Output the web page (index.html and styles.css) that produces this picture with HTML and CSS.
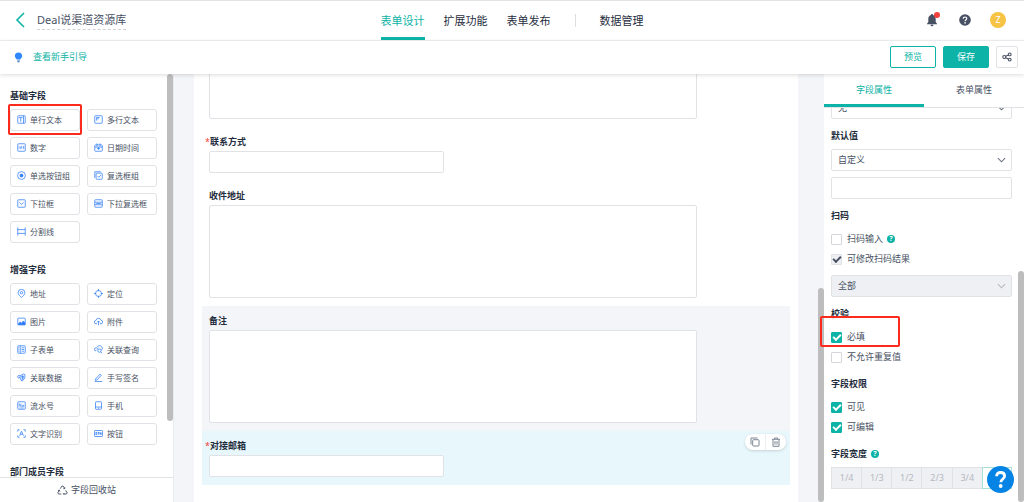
FILE: index.html
```html
<!DOCTYPE html>
<html lang="zh-CN">
<head>
<meta charset="utf-8">
<meta name="viewport" content="width=device-width, initial-scale=1">
<title>Deal说渠道资源库</title>
<link rel="stylesheet" href="styles.css">
</head>
<body>
<div class="app">
  <header class="topbar">
    <div class="topbar-left">
      <button class="icon-btn" aria-label="返回"><svg width="10" height="16" viewBox="0 0 10 16" fill="none" stroke="#0db3a6" stroke-width="1.6"><path d="M9 1 2 8l7 7"/></svg></button>
      <h1 class="form-title">Deal说渠道资源库</h1>
    </div>
    <nav class="main-nav">
      <a class="nav-link active" href="#design">表单设计</a>
      <a class="nav-link" href="#extend">扩展功能</a>
      <a class="nav-link" href="#publish">表单发布</a>
      <span class="nav-divider"></span>
      <a class="nav-link" href="#data">数据管理</a>
    </nav>
    <div class="topbar-right">
      <button class="icon-btn bell" aria-label="通知"><svg width="12" height="14" viewBox="0 0 12 14" fill="#485163"><path d="M6 1c.7 0 1 .4 1 1 1.800.5 2.700 2 2.700 4v3l1.300 1.700v.5H1v-.5L2.300 9V6c0-2 .9-3.500 2.700-4 0-.6.3-1 1-1zM4.500 11.700h3c0 .9-.6 1.500-1.500 1.500s-1.500-.6-1.500-1.500z"/></svg><span class="bell-dot"></span></button>
      <button class="icon-btn" aria-label="帮助"><svg width="12" height="12" viewBox="0 0 12 12"><circle cx="6" cy="6" r="5.800" fill="#485163"/><path d="M4.200 4.700c0-1.100.8-1.700 1.800-1.700s1.800.6 1.800 1.600c0 1.200-1.700 1.300-1.700 2.600" fill="none" stroke="#fff" stroke-width="1.200"/><circle cx="6.100" cy="8.900" r=".8" fill="#fff"/></svg></button>
      <span class="avatar">Z</span>
    </div>
  </header>

  <div class="subbar">
    <a class="guide" href="#guide"><svg width="9" height="11" viewBox="0 0 9 11"><path d="M4.500.5a3.600 3.600 0 0 1 3.600 3.600c0 1.500-1 2.300-1.800 3.400H2.700C1.900 6.400.9 5.600.9 4.100A3.600 3.600 0 0 1 4.500.5z" fill="#2f88ff"/><path d="M3.200 8.200h2.600v1L5 10.400H4l-.8-1.200z" fill="#6d93c9"/></svg>查看新手引导</a>
    <div class="actions">
      <button class="btn btn-outline">预览</button>
      <button class="btn btn-primary">保存</button>
      <button class="btn btn-share" aria-label="分享"><svg width="10" height="10" viewBox="0 0 10 10" fill="none" stroke="#485163" stroke-width="1.100"><circle cx="2.300" cy="5" r="1.500"/><circle cx="7.700" cy="2.400" r="1.400"/><circle cx="7.700" cy="7.600" r="1.400"/><path d="m3.700 4.300 2.700-1.300M3.700 5.700l2.700 1.300"/></svg></button>
    </div>
  </div>

  <div class="workspace">
    <aside class="sidebar">
      <div class="palette">
        <section class="group">
          <h2 class="heading">基础字段</h2>
          <div class="field-grid">
            <button class="field marked"><svg class="fi" viewBox="0 0 12 12"><rect x="1" y="1" width="10" height="10" rx="1"/><path d="M2.500 3.500h5M5 3.500V9M8.700 1v10"/></svg>单行文本</button>
            <button class="field"><svg class="fi" viewBox="0 0 12 12"><rect x="1" y="1" width="10" height="10" rx="1"/><path d="M3 3.500h4.500M3.500 3.500V7.500M5.300 3.500V6"/></svg>多行文本</button>
            <button class="field"><svg class="fi" viewBox="0 0 12 12"><rect x="1" y="1" width="10" height="10" rx="1"/><path d="M3 4.500v3M4.700 4.500h1.500V6H4.700v1.500h1.500M7.700 4.500H9v3H7.700M7.700 6H9" stroke-width=".8"/></svg>数字</button>
            <button class="field"><svg class="fi" viewBox="0 0 12 12"><rect x="1" y="2.500" width="10" height="8.500" rx="1"/><path d="M4 .5V5M8 .5V5M1 5.500h10M6 5.500V9M4 7.500h4"/></svg>日期时间</button>
            <button class="field"><svg class="fi" viewBox="0 0 12 12"><circle cx="6" cy="6" r="5.200"/><circle cx="6" cy="6" r="2" fill="#2f7cf6"/></svg>单选按钮组</button>
            <button class="field"><svg class="fi" viewBox="0 0 12 12"><path d="M9 1H1v8"/><rect x="2.800" y="2.800" width="8.200" height="8.200" rx="1"/><path d="m4.800 6.700 1.700 1.700L9.300 5.300"/></svg>复选框组</button>
            <button class="field"><svg class="fi" viewBox="0 0 12 12"><rect x="1" y="1" width="10" height="10" rx="1"/><path d="M3.200 4.500 6 7.300l2.800-2.800"/></svg>下拉框</button>
            <button class="field"><svg class="fi" viewBox="0 0 12 12"><rect x="1" y="1" width="10" height="10" rx="1"/><path d="M1 4.300h10M1 7.700h10M3 6h6"/></svg>下拉复选框</button>
            <button class="field"><svg class="fi" viewBox="0 0 12 12"><path d="M1 .5v11M11 .5v11M1 3.500h10M1 8.500h10"/></svg>分割线</button>
          </div>
        </section>
        <section class="group">
          <h2 class="heading">增强字段</h2>
          <div class="field-grid">
            <button class="field"><svg class="fi" viewBox="0 0 12 12"><path d="M6 11.300C3.500 9 1.500 7.300 1.500 4.900a4.500 4.500 0 0 1 9 0c0 2.400-2 4.100-4.500 6.400z"/><circle cx="6" cy="5" r="1.600"/></svg>地址</button>
            <button class="field"><svg class="fi" viewBox="0 0 12 12"><circle cx="6" cy="6" r="4"/><path d="M6 0v3M6 9v3M0 6h3M9 6h3"/></svg>定位</button>
            <button class="field"><svg class="fi" viewBox="0 0 12 12"><rect x="1" y="1.500" width="10" height="9" rx="1"/><path d="m1.500 10 2.500-3.500L6 8.300l2.500-3L10.700 8v2.200z" fill="#2f7cf6"/></svg>图片</button>
            <button class="field"><svg class="fi" viewBox="0 0 12 12"><path d="M4 9H2.800a2.200 2.200 0 0 1-.3-4.400 3.600 3.600 0 0 1 7-.1A2.200 2.200 0 0 1 9.300 9H8M6 11V5.500M4 7.300l2-2 2 2"/></svg>附件</button>
            <button class="field"><svg class="fi" viewBox="0 0 12 12"><rect x="1" y="1" width="10" height="10" rx="1"/><path d="M4.300 1v10M6 3.700h3.500M6 6h3.500M6 8.300h3.500M2 3.700h1M2 6h1M2 8.300h1"/></svg>子表单</button>
            <button class="field"><svg class="fi" viewBox="0 0 12 12"><path d="M3 7.800a2 2 0 1 1 0-3.900L6 1.200a3.500 3.500 0 0 1 4 5.600M3.500 6l2.500-2"/><circle cx="7.300" cy="7.500" r="2.200"/><path d="m8.900 9.100 2 2"/></svg>关联查询</button>
            <button class="field"><svg class="fi" viewBox="0 0 12 12"><circle cx="2.600" cy="5" r="1.700"/><path d="M4 4 8.500 1.200l2 1V6.500L7 10.800 5.200 9.500M4 6l2 4.500M5.500 4.500h4M5.500 6.500h4M7.500 3v6"/></svg>关联数据</button>
            <button class="field"><svg class="fi" viewBox="0 0 12 12"><path d="m2 8 6-6.500 1.700 1.600L4 9.300l-2.300.5zM1 11.300h10"/></svg>手写签名</button>
            <button class="field"><svg class="fi" viewBox="0 0 12 12"><rect x="1" y="1" width="10" height="10" rx="1"/><path d="M3 7.500v-4l2.300 4v-4M7 5.500h2V7.500H7zM3 9.300h6" stroke-width=".8"/></svg>流水号</button>
            <button class="field"><svg class="fi" viewBox="0 0 12 12"><rect x="2" y="1" width="8" height="10" rx="1"/><path d="M2 8h8M5.300 9.500h1.400"/></svg>手机</button>
            <button class="field"><svg class="fi" viewBox="0 0 12 12"><path d="M1 3.500V1h2.500M8.500 1H11v2.500M11 8.500V11H8.500M3.500 11H1V8.500M3.500 9 6 3l2.500 6M4.500 7h3"/></svg>文字识别</button>
            <button class="field"><svg class="fi" viewBox="0 0 12 12"><rect x=".6" y="2" width="10.800" height="8" rx="1"/><path d="M2.500 4.500h1.300v3H2.500zM5 4.500h2M6 4.500v3M8 7.500v-3l1.500 3v-3"/></svg>按钮</button>
          </div>
        </section>
        <section class="group">
          <h2 class="heading">部门成员字段</h2>
        </section>
      </div>
      <button class="recycle"><svg width="11" height="10" viewBox="0 0 11 10" fill="none" stroke="#485163" stroke-width=".9"><path d="M3.300 3.700 4.800 1.100h1.400l1.400 2.400M8.700 5.300l1.500 2.600-.7 1.100H6.500M4.300 9H1.500L.8 7.900l1.500-2.700M7.800 2.200v1.500H6.300M7.500 7.900 6.400 9l1.100.9M1 5.600l1.400-.5.500 1.400"/></svg>字段回收站</button>
      <span class="scroll-thumb thumb-left"></span>
    </aside>

    <main class="canvas">
      <form class="paper">
        <div class="form-item">
          <textarea class="area" aria-label="多行文本"></textarea>
        </div>
        <div class="form-item">
          <label class="heading required" for="f1">联系方式</label>
          <input class="line" id="f1" type="text">
        </div>
        <div class="form-item">
          <label class="heading" for="f2">收件地址</label>
          <textarea class="area" id="f2"></textarea>
        </div>
        <div class="form-item hovered">
          <label class="heading" for="f3">备注</label>
          <textarea class="area" id="f3"></textarea>
        </div>
        <div class="form-item selected">
          <label class="heading required" for="f4">对接邮箱</label>
          <input class="line" id="f4" type="text">
          <div class="item-tools">
            <button type="button" aria-label="复制"><svg width="10" height="10" viewBox="0 0 10 10" fill="none" stroke="#7d8593"><path d="M1 7.500V1h6.500"/><rect x="2.700" y="2.700" width="6.300" height="6.300" rx=".8"/></svg></button>
            <button type="button" aria-label="删除"><svg width="10" height="10" viewBox="0 0 10 10" fill="none" stroke="#7d8593"><path d="M1 2.300h8M3.500 2V1h3v1M2 2.500V9.300h6V2.500M4 4v3.700M6 4v3.700"/></svg></button>
          </div>
        </div>
      </form>
      <span class="scroll-thumb thumb-middle"></span>
    </main>

    <aside class="props">
      <div class="tabs" role="tablist">
        <button class="tab active" role="tab" aria-selected="true">字段属性</button>
        <button class="tab" role="tab" aria-selected="false">表单属性</button>
      </div>
      <div class="props-body">
        <div class="select-box first"><select aria-label="格式"><option>无</option></select><svg class="caret" viewBox="0 0 10 6"><path d="m1 1 4 4 4-4"/></svg></div>

        <section class="prop">
          <label class="heading" for="def">默认值</label>
          <div class="select-box"><select id="def"><option>自定义</option></select><svg class="caret" viewBox="0 0 10 6"><path d="m1 1 4 4 4-4"/></svg></div>
          <input class="line full" type="text" aria-label="默认值内容">
        </section>

        <section class="prop">
          <h2 class="heading">扫码</h2>
          <div class="checks">
            <label class="check"><input type="checkbox">扫码输入<span class="hint">?</span></label>
            <label class="check"><input type="checkbox" checked disabled>可修改扫码结果</label>
          </div>
          <div class="select-box off"><select aria-label="扫码类型" disabled><option>全部</option></select><svg class="caret" viewBox="0 0 10 6"><path d="m1 1 4 4 4-4"/></svg></div>
        </section>

        <section class="prop">
          <h2 class="heading">校验</h2>
          <div class="checks">
            <label class="check marked"><input type="checkbox" checked>必填</label>
            <label class="check"><input type="checkbox">不允许重复值</label>
          </div>
        </section>

        <section class="prop">
          <h2 class="heading">字段权限</h2>
          <div class="checks">
            <label class="check"><input type="checkbox" checked>可见</label>
            <label class="check"><input type="checkbox" checked>可编辑</label>
          </div>
        </section>

        <section class="prop">
          <h2 class="heading">字段宽度<span class="hint">?</span></h2>
          <div class="segments">
            <button disabled>1/4</button><button disabled>1/3</button><button disabled>1/2</button><button disabled>2/3</button><button disabled>3/4</button><button class="on" aria-label="整行"></button>
          </div>
        </section>
      </div>
      <span class="scroll-thumb thumb-right"></span>
      <button class="help-float" aria-label="在线帮助"><svg width="27" height="27" viewBox="0 0 27 27"><circle cx="13.500" cy="13.500" r="13.500" fill="#0684e6"/><path d="M9.600 10.200c0-2.500 1.700-3.700 4-3.700s4 1.300 4 3.500c0 3-3.800 3-3.800 6.300" fill="none" stroke="#fff" stroke-width="2.800"/><circle cx="13.700" cy="20" r="1.900" fill="#fff"/></svg></button>
    </aside>
  </div>
</div>
</body>
</html>
```

FILE: styles.css
```css
*,
*::before,
*::after {
  box-sizing: border-box;
}

:root {
  --teal: #0db3a6;
  --ink: #1f2d3d;
  --text: #485163;
  --line: #e0e2e6;
  --mark: #fb2a1c;
}

body {
  margin: 0;
  background: #fff;
  color: var(--text);
  font: 9px/14px "Noto Sans", "Noto Sans CJK SC", sans-serif;
}

button,
input,
select,
textarea {
  margin: 0;
  padding: 0;
  border: 0;
  color: inherit;
  font: inherit;
}

button {
  background: none;
}

svg {
  display: block;
  flex: none;
}

a {
  color: inherit;
  text-decoration: none;
}

.app {
  display: flex;
  flex-direction: column;
  height: 100vh;
  overflow: hidden;
}

/* Top bar */
.topbar {
  display: grid;
  grid-template-columns: 1fr auto 1fr;
  flex: none;
  height: 41px;
  border-top: 1px solid #e3e3e3;
  border-bottom: 1px solid #f1f2f4;
}

.topbar-left,
.topbar-right,
.main-nav,
.subbar,
.guide,
.actions {
  display: flex;
  align-items: center;
}

.topbar-left {
  gap: 12px;
  padding: 0 0 2px 15px;
}

.form-title {
  margin: 0;
  border-bottom: 1px dashed #cfd2d6;
  font-size: 11px;
  font-weight: 400;
  line-height: 19px;
}

.main-nav {
  gap: 19px;
  color: var(--ink);
  font-size: 11px;
}

.nav-link {
  padding-top: 3px;
  border-bottom: 3px solid transparent;
  line-height: 32px;
}

.nav-link.active {
  border-color: var(--teal);
  color: var(--teal);
}

.nav-divider {
  width: 1px;
  height: 13px;
  margin: 0 5px;
  background: #dcdee2;
}

.topbar-right {
  justify-content: flex-end;
  gap: 19px;
  padding: 0 18px 1px 0;
}

.bell {
  position: relative;
  margin-right: 2px;
}

.bell-dot {
  position: absolute;
  top: -1px;
  right: -2px;
  width: 6px;
  height: 6px;
  border-radius: 50%;
  background: #f5413d;
}

.avatar {
  width: 16px;
  height: 16px;
  border-radius: 50%;
  background: #f7c344;
  color: #fff;
  line-height: 16px;
  text-align: center;
}

/* Action bar */
.subbar {
  position: relative;
  z-index: 1;
  flex: none;
  justify-content: space-between;
  height: 33px;
  padding: 0 6px 1px 14px;
  background: #fff;
  box-shadow: 0 1px 4px rgba(0, 0, 0, 0.15);
}

.guide {
  gap: 10px;
  color: var(--teal);
}

.actions {
  gap: 7px;
}

.btn {
  width: 46px;
  height: 22px;
  border: 1px solid var(--teal);
  border-radius: 2px;
}

.btn-outline {
  color: var(--teal);
}

.btn-primary {
  background: var(--teal);
  color: #fff;
}

.btn-share {
  display: grid;
  place-items: center;
  width: 22px;
  border-color: var(--line);
}

/* Columns */
.workspace {
  display: flex;
  flex: 1;
  min-height: 0;
}

.heading {
  display: flex;
  align-items: center;
  margin: 0;
  color: var(--ink);
  font-size: 9px;
  font-weight: 700;
  line-height: 14px;
}

.scroll-thumb {
  position: absolute;
  right: 0;
  width: 6px;
  border-radius: 3px;
  background: #bdbdbd;
}

.thumb-left {
  top: 0;
  height: 81%;
}

.thumb-middle {
  top: 50%;
  bottom: 0;
}

.thumb-right {
  top: 46%;
  bottom: 0;
}

/* Field palette */
.sidebar {
  position: relative;
  display: flex;
  flex: none;
  flex-direction: column;
  width: 174px;
  border-right: 1px solid #e9ebee;
}

.palette {
  display: flex;
  flex: 1;
  flex-direction: column;
  gap: 20px;
  min-height: 0;
  padding: 15px 16px 0 10px;
  overflow: hidden;
}

.field-grid {
  display: grid;
  grid-template-columns: 1fr 1fr;
  gap: 6px 7px;
  margin-top: 6px;
}

.field {
  display: flex;
  align-items: center;
  gap: 4px;
  height: 22px;
  padding: 0 0 1px 6px;
  border: 1px solid var(--line);
  border-radius: 3px;
  font-size: 8px;
  white-space: nowrap;
}

.fi {
  width: 9px;
  height: 9px;
  fill: none;
  stroke: #2f7cf6;
  stroke-width: 1;
}

.marked {
  position: relative;
}

.marked::before {
  position: absolute;
  border: 2px solid var(--mark);
  border-radius: 2px;
  content: "";
}

.field.marked::before {
  inset: -6px -3px -5px;
}

.recycle {
  display: flex;
  flex: none;
  align-items: center;
  justify-content: center;
  gap: 3px;
  height: 25px;
  border-top: 1px solid var(--line);
}

/* Form canvas */
.canvas {
  position: relative;
  flex: 1;
  min-width: 0;
  padding: 0 26px 0 20px;
  overflow: hidden;
  background: #f4f5f8;
}

.paper {
  min-height: 100%;
  margin-top: -58px;
  padding: 0 8px 100px;
  background: #fff;
}

.form-item {
  position: relative;
  padding: 8px 7px;
}

.hovered {
  background: #f4f5f8;
}

.selected {
  background: #e8f7fb;
}

.required::before {
  margin-left: -4px;
  color: #f5413d;
  content: "*";
  font-weight: 400;
}

.area,
.line {
  display: block;
  margin-top: 2px;
  border: 1px solid var(--line);
  border-radius: 2px;
  background: #fff;
}

.area {
  width: 85%;
  height: 93px;
  resize: none;
}

.line {
  width: 41%;
  height: 22px;
  padding: 0 5px;
}

.item-tools {
  position: absolute;
  top: 3px;
  right: 4px;
  display: flex;
  border-radius: 8px;
  background: #fff;
  box-shadow: 0 1px 3px rgba(0, 0, 0, 0.15);
}

.item-tools button {
  padding: 3px 5px;
}

.item-tools button + button {
  border-left: 1px solid #eceef1;
}

/* Properties */
.props {
  position: relative;
  display: flex;
  flex: none;
  flex-direction: column;
  width: 200px;
}

.tabs {
  display: grid;
  flex: none;
  grid-template-columns: 1fr 1fr;
  height: 34px;
  border-bottom: 1px solid var(--line);
}

.tab {
  padding-top: 2px;
  border-bottom: 3px solid transparent;
}

.tab.active {
  border-color: var(--teal);
  color: var(--teal);
}

.props-body {
  display: flex;
  flex: 1;
  flex-direction: column;
  gap: 10px;
  min-height: 0;
  margin-left: -5px;
  padding: 0 12px;
  overflow: hidden;
}

.prop {
  display: flex;
  flex-direction: column;
  gap: 6px;
}

.select-box {
  position: relative;
  flex: none;
}

.select-box.first {
  margin-top: -11px;
}

.select-box select {
  display: block;
  width: 100%;
  height: 22px;
  padding: 0 6px;
  border: 1px solid var(--line);
  border-radius: 2px;
  appearance: none;
  background: #fff;
}

.select-box.off select {
  background: #eff0f4;
  opacity: 1;
}

.caret {
  position: absolute;
  top: 8px;
  right: 6px;
  width: 9px;
  height: 6px;
  fill: none;
  stroke: #6b7280;
  stroke-width: 1.2;
}

.off .caret {
  stroke: #b4b8c0;
}

.line.full {
  width: 100%;
  margin: 0;
}

.check {
  display: flex;
  align-items: center;
  height: 20px;
}

.check input {
  display: grid;
  place-items: center;
  width: 11px;
  height: 11px;
  margin-right: 5px;
  border: 1px solid #d3d6db;
  border-radius: 1px;
  appearance: none;
}

.check input:checked {
  border-color: var(--teal);
  background: var(--teal);
  color: #fff;
}

.check input:disabled {
  border-color: var(--line);
  background: #eff0f4;
  color: var(--text);
}

.check input:checked::after {
  width: 8px;
  height: 5px;
  margin-bottom: 2px;
  border-bottom: 2px solid;
  border-left: 2px solid;
  content: "";
  transform: rotate(-45deg);
}

.check.marked::before {
  top: -11px;
  left: -11px;
  width: 80px;
  height: 31px;
}

.hint {
  width: 8px;
  height: 8px;
  margin-left: 4px;
  border-radius: 50%;
  background: var(--teal);
  color: #fff;
  font-size: 7px;
  font-weight: 700;
  line-height: 8px;
  text-align: center;
}

.segments {
  display: grid;
  grid-template-columns: repeat(6, 1fr);
  height: 22px;
}

.segments button {
  border: 1px solid var(--line);
  border-right-width: 0;
  background: #eff0f4;
  color: #b4b8c0;
}

.segments .on {
  border-right-width: 1px;
  border-color: #a5e0da;
  background: #fff;
}

.help-float {
  position: absolute;
  right: 10px;
  bottom: 9px;
}
```
